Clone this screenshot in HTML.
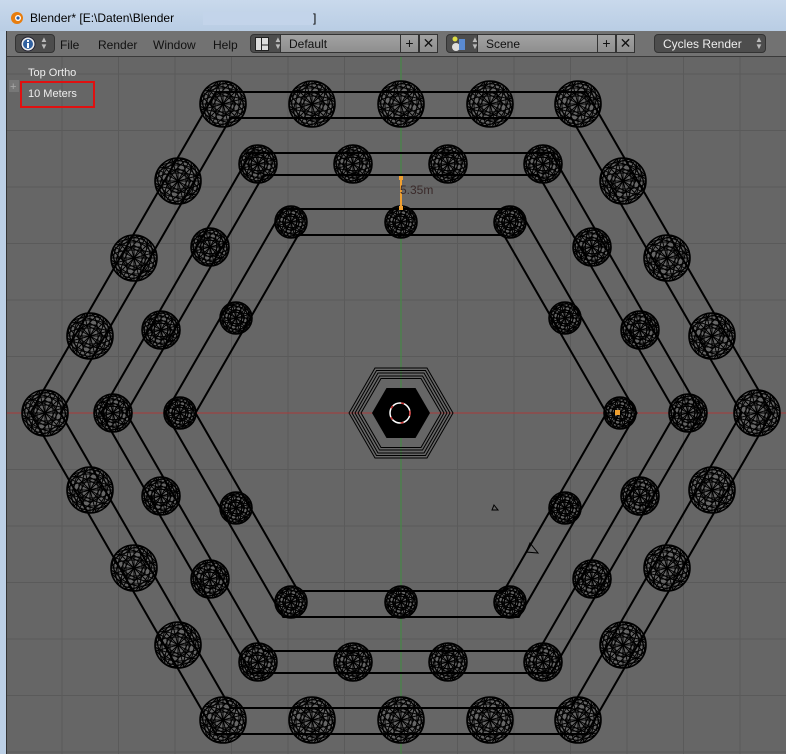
<!DOCTYPE html>
<html><head><meta charset="utf-8"><style>
body{margin:0;width:786px;height:754px;overflow:hidden;background:#666;font-family:"Liberation Sans",sans-serif}
#title{position:absolute;left:0;top:0;width:786px;height:31px;background:linear-gradient(#c9d9ec,#b9cde4);}
#title span{position:absolute;left:30px;top:11px;font-size:12px;color:#000}
#blur{position:absolute;left:203px;top:12px;width:112px;height:13px;background:#c3d4ea}
#lframe{position:absolute;left:0;top:31px;width:6px;height:723px;background:#bcd0e6;border-right:1px solid #333}
#hdr{position:absolute;left:7px;top:31px;width:779px;height:25px;background:#727272;border-bottom:1px solid #3a3a3a}
.dd{position:absolute;top:3px;height:19px;background:#4d4d4d;border:1px solid #333;border-radius:4px;box-sizing:border-box}
.fld{position:absolute;top:3px;height:19px;background:linear-gradient(#a2a2a2,#8e8e8e);border:1px solid #333;box-sizing:border-box;font-size:12px;color:#111;padding:2px 0 0 8px}
.mi{position:absolute;top:7px;font-size:12px;color:#111}
.btn{position:absolute;top:3px;width:19px;height:19px;background:linear-gradient(#a2a2a2,#8e8e8e);border:1px solid #333;box-sizing:border-box;font-size:14px;line-height:16px;text-align:center;color:#111}
#vp{position:absolute;left:7px;top:57px}
.lab{position:absolute;color:#eee;font-size:11px}
</style></head><body>
<div id="title"><svg width="16" height="16" style="position:absolute;left:9px;top:10px"><circle cx="8" cy="8" r="6" fill="#e87d0d"/><circle cx="9" cy="8" r="3" fill="#fff"/><circle cx="9" cy="8" r="1.6" fill="#2a5fa8"/></svg><span>Blender* [E:\Daten\Blender</span><div id="blur"></div><span style="left:313px">]</span></div>
<div id="lframe"></div>
<svg id="vp" width="779" height="697" viewBox="7 57 779 697">
<defs>
<g id="s0" fill="none" stroke="#000" stroke-width="1">
<ellipse rx="1" ry="0.35" vector-effect="non-scaling-stroke"/><ellipse rx="1" ry="0.7" vector-effect="non-scaling-stroke"/>
<ellipse rx="0.35" ry="1" vector-effect="non-scaling-stroke"/><ellipse rx="0.7" ry="1" vector-effect="non-scaling-stroke"/>
<path d="M-1 0H1M0-1V1M-.7-.7L.7 .7M.7-.7L-.7 .7" vector-effect="non-scaling-stroke"/>
<polygon points="0,-.55 .48,-.28 .48,.28 0,.55 -.48,.28 -.48,-.28" vector-effect="non-scaling-stroke"/>
</g>
<g id="s">
<use href="#s0"/><use href="#s0" transform="rotate(30)"/>
<circle r="1" fill="none" stroke="#000" stroke-width="1.6" vector-effect="non-scaling-stroke"/>
<circle r=".88" fill="none" stroke="#000" stroke-width="1" vector-effect="non-scaling-stroke"/>
</g>
</defs>
<rect x="0" y="0" width="786" height="754" fill="#666"/>
<g stroke="#5a5a5a" stroke-width="1">
<path d="M62 57V754M118.5 57V754M175 57V754M231.5 57V754M288 57V754M344.5 57V754M457.5 57V754M514 57V754M570.5 57V754M627 57V754M683.5 57V754M740 57V754"/>
<path d="M7 74H786M7 130.5H786M7 187H786M7 243.5H786M7 300H786M7 356.5H786M7 469.5H786M7 526H786M7 582.5H786M7 639H786M7 695.5H786M7 752H786"/>
</g>
<line x1="7" y1="413" x2="786" y2="413" stroke="#a83a3a" stroke-width="1"/>
<line x1="401" y1="57" x2="401" y2="754" stroke="#3f8f3f" stroke-width="1"/>
<g fill="none" stroke="#000" stroke-width="2">
<polygon points="30.3,413 215.7,92 586.3,92 771.7,413 586.3,734 215.7,734"/>
<polygon points="60.4,413 230.7,118 571.3,118 741.6,413 571.3,708 230.7,708"/>
<polygon points="100.8,413 250.9,153 551.1,153 701.2,413 551.1,673 250.9,673"/>
<polygon points="126.2,413 263.6,175 538.4,175 675.8,413 538.4,651 263.6,651"/>
<polygon points="165.4,413 283.2,209 518.8,209 636.6,413 518.8,617 283.2,617"/>
<polygon points="195.5,413 298.2,235 503.8,235 606.5,413 503.8,591 298.2,591"/>
</g>
<g>
<use href="#s" transform="translate(223,104) scale(23)"/><use href="#s" transform="translate(312,104) scale(23)"/><use href="#s" transform="translate(401,104) scale(23)"/><use href="#s" transform="translate(490,104) scale(23)"/><use href="#s" transform="translate(578,104) scale(23)"/>
<use href="#s" transform="translate(178,181) scale(23)"/><use href="#s" transform="translate(134,258) scale(23)"/><use href="#s" transform="translate(90,336) scale(23)"/><use href="#s" transform="translate(45,413) scale(23)"/><use href="#s" transform="translate(90,490) scale(23)"/><use href="#s" transform="translate(134,568) scale(23)"/><use href="#s" transform="translate(178,645) scale(23)"/>
<use href="#s" transform="translate(223,720) scale(23)"/><use href="#s" transform="translate(312,720) scale(23)"/><use href="#s" transform="translate(401,720) scale(23)"/><use href="#s" transform="translate(490,720) scale(23)"/><use href="#s" transform="translate(578,720) scale(23)"/>
<use href="#s" transform="translate(623,645) scale(23)"/><use href="#s" transform="translate(667,568) scale(23)"/><use href="#s" transform="translate(712,490) scale(23)"/><use href="#s" transform="translate(757,413) scale(23)"/><use href="#s" transform="translate(712,336) scale(23)"/><use href="#s" transform="translate(667,258) scale(23)"/><use href="#s" transform="translate(623,181) scale(23)"/>
<use href="#s" transform="translate(258,164) scale(19)"/><use href="#s" transform="translate(353,164) scale(19)"/><use href="#s" transform="translate(448,164) scale(19)"/><use href="#s" transform="translate(543,164) scale(19)"/>
<use href="#s" transform="translate(210,247) scale(19)"/><use href="#s" transform="translate(161,330) scale(19)"/><use href="#s" transform="translate(113,413) scale(19)"/><use href="#s" transform="translate(161,496) scale(19)"/><use href="#s" transform="translate(210,579) scale(19)"/>
<use href="#s" transform="translate(258,662) scale(19)"/><use href="#s" transform="translate(353,662) scale(19)"/><use href="#s" transform="translate(448,662) scale(19)"/><use href="#s" transform="translate(543,662) scale(19)"/>
<use href="#s" transform="translate(592,579) scale(19)"/><use href="#s" transform="translate(640,496) scale(19)"/><use href="#s" transform="translate(688,413) scale(19)"/><use href="#s" transform="translate(640,330) scale(19)"/><use href="#s" transform="translate(592,247) scale(19)"/>
<use href="#s" transform="translate(291,222) scale(16)"/><use href="#s" transform="translate(401,222) scale(16)"/><use href="#s" transform="translate(510,222) scale(16)"/>
<use href="#s" transform="translate(236,318) scale(16)"/><use href="#s" transform="translate(180,413) scale(16)"/><use href="#s" transform="translate(236,508) scale(16)"/>
<use href="#s" transform="translate(291,602) scale(16)"/><use href="#s" transform="translate(401,602) scale(16)"/><use href="#s" transform="translate(510,602) scale(16)"/>
<use href="#s" transform="translate(565,508) scale(16)"/><use href="#s" transform="translate(620,413) scale(16)"/><use href="#s" transform="translate(565,318) scale(16)"/>
</g>
<g fill="none" stroke="#000" stroke-width="1">
<polygon points="361,413 381,378.5 421,378.5 441,413 421,447.5 381,447.5"/>
<polygon points="358,413 379.5,376 422.5,376 444,413 422.5,450 379.5,450"/>
<polygon points="355,413 378,373 424,373 447,413 424,453 378,453"/>
<polygon points="352,413 376.5,370.5 425.5,370.5 450,413 425.5,455.5 376.5,455.5"/>
<polygon points="349,413 375,368 427,368 453,413 427,458 375,458"/>
</g>
<polygon points="372,413 386.5,388 415.5,388 430,413 415.5,438 386.5,438" fill="#000"/>
<circle cx="400" cy="413" r="10" fill="none" stroke="#fff" stroke-width="1.5"/>
<circle cx="400" cy="413" r="10" fill="none" stroke="#c33" stroke-width="1.5" stroke-dasharray="3 9"/>
<line x1="401" y1="178" x2="401" y2="208" stroke="#f0a030" stroke-width="2"/>
<rect x="399" y="176" width="4" height="4" fill="#f0a030"/><rect x="399" y="206" width="4" height="4" fill="#f0a030"/>
<text x="400" y="194" font-family="Liberation Sans" font-size="12" fill="#3a2a2a">5.35m</text>
<rect x="615" y="410" width="5" height="5" fill="#f0a030"/>
<polygon points="494,505 498,510 492,510" fill="none" stroke="#000"/>
<polygon points="530,543 538,553 526,552" fill="none" stroke="#000"/>
<rect x="21" y="82" width="73" height="25" fill="none" stroke="#e01010" stroke-width="2"/>
<rect x="9" y="80" width="10" height="12" fill="#777"/><text x="10" y="90" font-size="11" fill="#aaa" font-family="Liberation Sans">+</text>
</svg>
<div class="lab" style="left:28px;top:67px">Top Ortho</div>
<div class="lab" style="left:28px;top:88px">10 Meters</div>
<div id="hdr">
<div class="dd" style="left:8px;width:40px"></div>
<svg width="16" height="16" style="position:absolute;left:13px;top:5px"><circle cx="8" cy="8" r="7" fill="#eee" stroke="#223"/><circle cx="8" cy="8" r="5" fill="#3060a0"/><rect x="7" y="7" width="2" height="5" fill="#fff"/><rect x="7" y="4" width="2" height="2" fill="#fff"/></svg>
<div style="position:absolute;left:33px;top:5px;color:#bbb;font-size:8px;line-height:7px">▲<br>▼</div>
<div class="mi" style="left:53px">File</div><div class="mi" style="left:91px">Render</div><div class="mi" style="left:146px">Window</div><div class="mi" style="left:206px">Help</div>
<div class="dd" style="left:243px;width:40px"></div>
<svg width="14" height="14" style="position:absolute;left:248px;top:6px"><rect x="0.5" y="0.5" width="13" height="13" fill="#ddd" stroke="#222"/><path d="M6.5 1V13M7 8H13" stroke="#222"/></svg>
<div style="position:absolute;left:267px;top:5px;color:#bbb;font-size:8px;line-height:7px">▲<br>▼</div>
<div class="fld" style="left:273px;width:128px">Default</div>
<div class="btn" style="left:393px">+</div><div class="btn" style="left:412px">✕</div>
<div class="dd" style="left:439px;width:40px"></div>
<svg width="16" height="16" style="position:absolute;left:444px;top:5px"><circle cx="5" cy="11" r="4" fill="#ddd"/><rect x="8" y="3" width="6" height="11" fill="#5a8ad0"/><circle cx="4" cy="3" r="2.5" fill="#dd4"/></svg>
<div style="position:absolute;left:464px;top:5px;color:#bbb;font-size:8px;line-height:7px">▲<br>▼</div>
<div class="fld" style="left:470px;width:128px">Scene</div>
<div class="btn" style="left:590px">+</div><div class="btn" style="left:609px">✕</div>
<div class="dd" style="left:647px;width:112px;color:#eee;font-size:12px;padding:2px 0 0 8px">Cycles Render</div>
<div style="position:absolute;left:748px;top:5px;color:#bbb;font-size:8px;line-height:7px">▲<br>▼</div>
</div>
</body></html>
